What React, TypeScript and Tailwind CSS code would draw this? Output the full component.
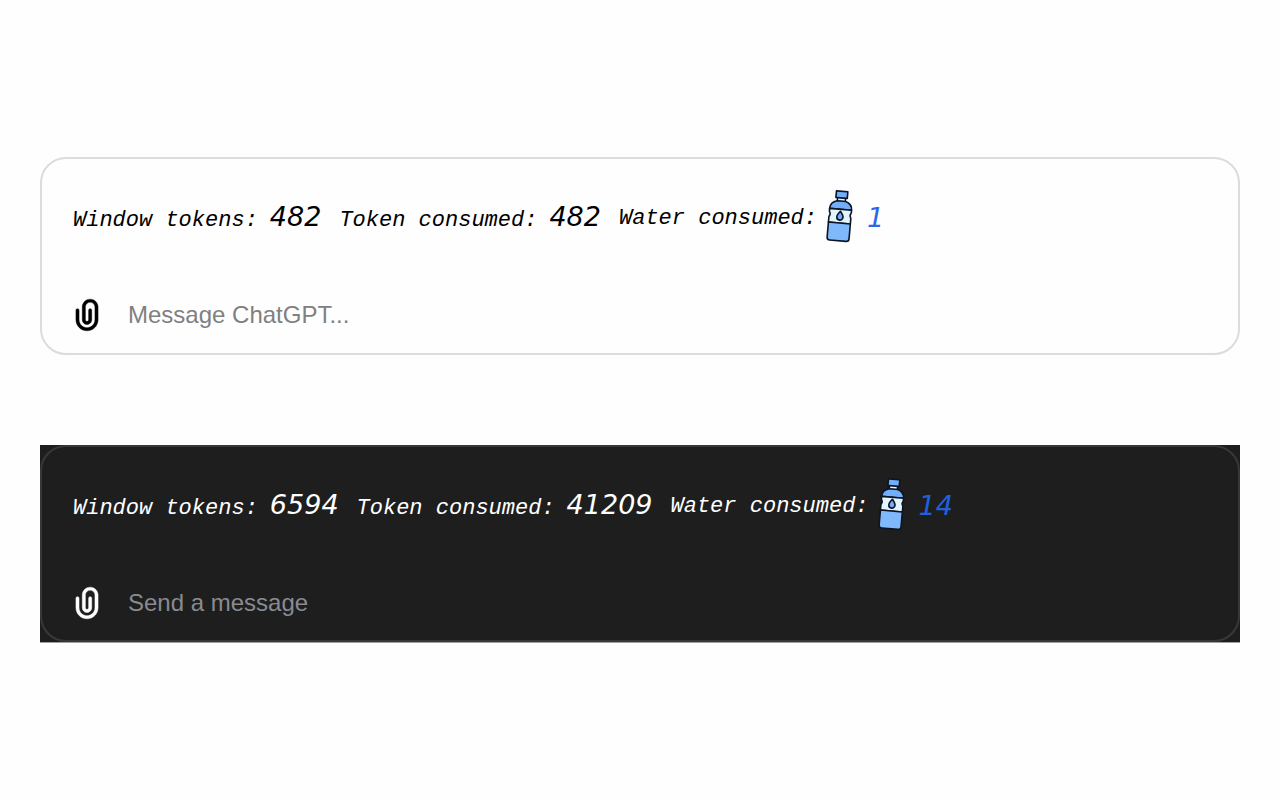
type PanelProps = {
  id: string;
  dark?: boolean;
  windowTokens: number;
  consumed: number;
  water: number;
  placeholder: string;
};

function Paperclip() {
  return (
    <svg viewBox="0 0 24 24" className="size-[38px]" fill="currentColor" aria-hidden="true">
      <path
        fillRule="evenodd"
        clipRule="evenodd"
        stroke="currentColor"
        strokeWidth="0.25"
        d="M9 7C9 4.23858 11.2386 2 14 2C16.7614 2 19 4.23858 19 7V15C19 18.866 15.866 22 12 22C8.13401 22 5 18.866 5 15V9C5 8.44772 5.44772 8 6 8C6.55228 8 7 8.44772 7 9V15C7 17.7614 9.23858 20 12 20C14.7614 20 17 17.7614 17 15V7C17 5.34315 15.6569 4 14 4C12.3431 4 11 5.34315 11 7V15C11 15.5523 11.4477 16 12 16C12.5523 16 13 15.5523 13 15V9C13 8.44772 13.4477 8 14 8C14.5523 8 15 8.44772 15 9V15C15 16.6569 13.6569 18 12 18C10.3431 18 9 16.6569 9 15V7Z"
      />
    </svg>
  );
}

function Bottle() {
  return (
    <svg viewBox="0 0 30 54" className="h-[54px] w-[30px] shrink-0" aria-hidden="true">
      <g transform="rotate(5 15 27)" stroke="#0b1524" strokeWidth="1.6" strokeLinejoin="round" strokeLinecap="round">
        <path d="M11 8.500h8v4h-8z" fill="#e4f5fc" />
        <path d="M9.300 2.300h11.400v6.600H9.300z" fill="#72aefa" />
        <path d="M10.800 12h8.400c3.900 1.100 6.800 3.500 6.800 8.300H4c0-4.800 2.900-7.200 6.800-8.300z" fill="#72aefa" />
        <path d="M4 20.300h22v2.400c0 1.100-1 1.600-1 3s1 1.900 1 3.200v5.100H4v-5.100c0-1.300 1-1.800 1-3.200s-1-1.900-1-3z" fill="#e4f5fc" />
        <path d="M4 34h22v15c0 1.700-1.200 2.800-2.800 2.800H6.800C5.200 51.800 4 50.700 4 49z" fill="#80b8fc" />
        <path d="M15 22.300c1.600 2 3.100 3.900 3.100 5.700a3.100 3.100 0 0 1-6.200 0c0-1.800 1.500-3.700 3.100-5.700z" fill="#72aefa" />
      </g>
    </svg>
  );
}

function Panel({ id, dark = false, windowTokens, consumed, water, placeholder }: PanelProps) {
  const number = "font-['DejaVu_Sans',sans-serif] text-[27px] leading-9";
  return (
    <section className={dark ? "bg-[#1e1e1e] border-b border-[#a0a0a0] text-white" : "text-black"}>
      <div
        className={`rounded-[26px] border-2 pt-[30px] pr-[30px] pl-[31px] ${
          dark ? "border-[#383838] pb-[18px]" : "border-[#dcdcdc] pb-[19px]"
        }`}
      >
        <div className="flex items-center gap-[18px] font-['Liberation_Mono',monospace] text-[22px] leading-9 italic">
          <p className="flex items-baseline gap-3">
            Window tokens: <span className={number}>{windowTokens}</span>
          </p>
          <p className="flex items-baseline gap-3">
            Token consumed: <span className={number}>{consumed}</span>
          </p>
          <p className="flex items-center">
            <span>Water consumed:</span>
            <span className="mr-3 ml-2 pb-[6px]">
              <Bottle />
            </span>
            <span className={`${number} pb-[2px] ${dark ? "text-[#2160dd]" : "text-[#2d66ec]"}`}>{water}</span>
          </p>
        </div>
        <div className="mt-[47px] flex items-center gap-[22px]">
          <button type="button" aria-label="Attach file" className="-ml-[5px]">
            <Paperclip />
          </button>
          <input
            id={id}
            aria-label={placeholder}
            placeholder={placeholder}
            className={`min-w-0 flex-1 bg-transparent font-['Liberation_Sans',sans-serif] text-[24px] leading-9 outline-none ${
              dark ? "placeholder:text-[#8a8a91]" : "placeholder:text-[#808080]"
            }`}
          />
        </div>
      </div>
    </section>
  );
}

export default function App() {
  return (
    <main className="flex min-h-screen flex-col justify-center gap-[90px] bg-[#fefefe] px-10">
      <Panel id="light-message" windowTokens={482} consumed={482} water={1} placeholder="Message ChatGPT..." />
      <Panel id="dark-message" dark windowTokens={6594} consumed={41209} water={14} placeholder="Send a message" />
    </main>
  );
}
